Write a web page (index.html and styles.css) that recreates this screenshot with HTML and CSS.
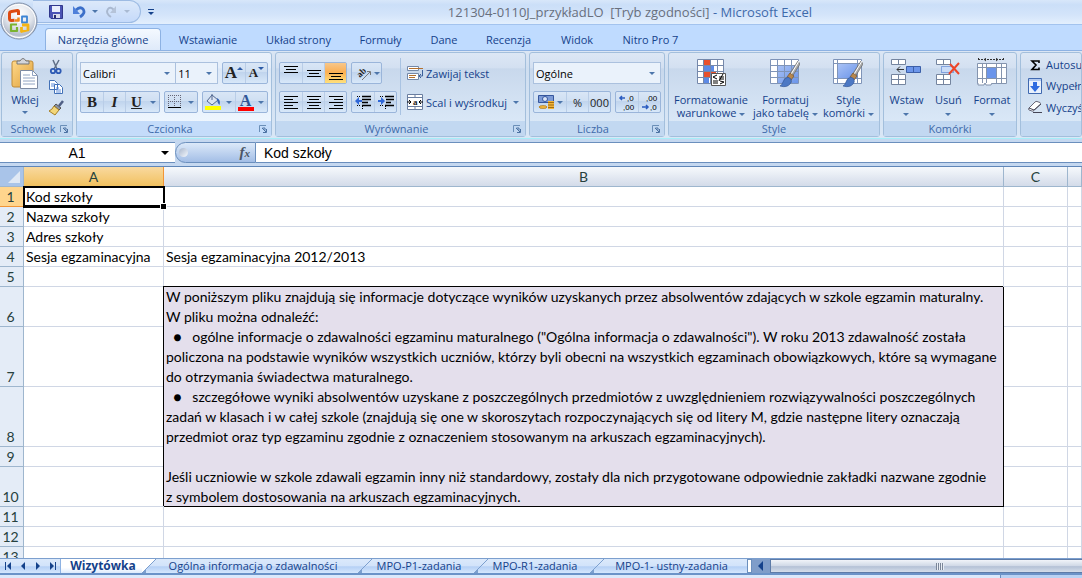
FILE: index.html
```html
<!DOCTYPE html>
<html lang="pl">
<head>
<meta charset="utf-8">
<title>121304-0110J_przykładLO [Tryb zgodności] - Microsoft Excel</title>
<link rel="stylesheet" href="styles.css">
</head>
<body>
<svg class="defs" aria-hidden="true">
  <defs>
    <linearGradient id="gBlue" x1="0" y1="0" x2="1" y2="1"><stop offset="0" stop-color="#a9c2f5"/><stop offset="1" stop-color="#6b95ea"/></linearGradient>
    <linearGradient id="gGold" x1="0" y1="0" x2="1" y2="1"><stop offset="0" stop-color="#ffd98a"/><stop offset="1" stop-color="#dfa03c"/></linearGradient>
    <radialGradient id="gOrb" cx=".5" cy=".3" r=".7"><stop offset="0" stop-color="#fff"/><stop offset=".55" stop-color="#dfe3ea"/><stop offset=".85" stop-color="#b4bccb"/><stop offset="1" stop-color="#eef2f8"/></radialGradient>
  </defs>
  <symbol id="brush" viewBox="0 0 20 28"><path d="M18 1 9 15l3 2L20 4z" fill="#a9a9a9" stroke="#666" stroke-width=".7"/><path d="m19 1-9 15" stroke="#fff"/><path d="m10 13 4 3-3 4-4-3z" fill="#b8874c" stroke="#79552c" stroke-width=".7"/><path d="M8 17q-4 1-5 5-1 3-3 4 7 2 10-2 2-2 1-5z" fill="#4c78c4" stroke="#2c4f91" stroke-width=".6"/></symbol>
  <symbol id="al" viewBox="0 0 16 16"><path d="M1 2.500h14M1 5.500h9M1 8.500h14M1 11.500h9M1 14.500h14" stroke="#000"/></symbol>
  <symbol id="launch" viewBox="0 0 8 8"><path d="M.5 7V.5H7" fill="none" stroke="#6b8fb8"/><path d="M3.500 3h2.500v2.500M3 3l4 4M4 7.500h3.500V4" fill="none" stroke="#4c72a3"/></symbol>
</svg>

<header class="titlebar">
  <button class="orb" aria-label="Przycisk Office">
    <svg viewBox="0 0 38 38"><circle cx="19" cy="19" r="18" fill="url(#gOrb)" stroke="#7f8fa8"/><circle cx="19" cy="19" r="16.500" fill="none" stroke="#fff"/>
      <g fill="none" stroke-linejoin="round"><path d="M18.500 13V9.500q0-1-1-1l-6 1q-2 .3-2 2v5q0 2 2 2l3-.3" stroke="#dd4b12" stroke-width="3"/><path d="M15 18.500h3.500v-3" stroke="#ef8a1c" stroke-width="2.500"/><path d="M22 14.500h5v6h-5z" stroke="#3c84d4" stroke-width="1.800"/><path d="M17 22.500h-6v6.500h6v-4" stroke="#7ab330" stroke-width="2.200"/><path d="M22 23h6v5l-6.500 1.500V25" stroke="#f4b414" stroke-width="2.800"/></g>
      <path d="M18 20.500h3" stroke="#fff"/></svg>
  </button>
  <div class="qat">
    <div class="pill">
      <button aria-label="Zapisz"><svg width="14" height="14" viewBox="0 0 14 14"><path d="M.5.5h13v13H2l-1.500-1.500z" fill="#4a53b5" stroke="#31388c"/><path d="M3 1h8v6H3z" fill="#e9eefc"/><path d="M4 9h7v4H4z" fill="#d9dceb"/><path d="M5 10h2v3H5z" fill="#262c6e"/></svg></button>
      <button aria-label="Cofnij"><svg width="14" height="14" viewBox="0 0 14 14"><path d="M4 5q4-4 7-1 3 4-3 8" fill="none" stroke="#3b6fc9" stroke-width="2.800"/><path d="M1 1v8h7z" fill="#4f80da"/></svg></button>
      <i class="arr"></i>
      <button aria-label="Ponów"><svg width="14" height="14" viewBox="0 0 14 14"><path d="M10 5Q6 1 4 4q-3 4 3 8" fill="none" stroke="#a9b8cf" stroke-width="2"/><path d="M12 1v7H6z" fill="#b5c3d8"/></svg></button>
      <i class="arr pale"></i>
    </div>
    <button class="more" aria-label="Dostosuj"><i></i></button>
  </div>
  <h1>121304-0110J_przykładLO&nbsp; [Tryb zgodności] <span>- Microsoft Excel</span></h1>
</header>

<nav class="tabs">
  <button class="on">Narzędzia główne</button><button>Wstawianie</button><button>Układ strony</button><button>Formuły</button><button>Dane</button><button>Recenzja</button><button>Widok</button><button>Nitro Pro 7</button>
</nav>

<section class="ribbon">
  <div class="group g-clip">
    <div class="body">
      <button class="big"><svg width="28" height="32" viewBox="0 0 28 32"><rect x="1" y="3" width="21" height="26" rx="2" fill="url(#gGold)" stroke="#bf8b38"/><path d="M6 6h12V3h-3q-3-5-6 0H6z" fill="#d4d6da" stroke="#777"/><path d="M9.500 12.500h12l5 5v13h-17z" fill="#fff" stroke="#7d8ba3"/><path d="M21.500 12.500v5h5M12 17h7M12 20h12M12 23h12M12 26h12" fill="none" stroke="#91a4c2"/></svg><span>Wklej</span><i class="arr"></i></button>
      <div class="stack">
        <button aria-label="Wytnij"><svg width="16" height="16" viewBox="0 0 16 16"><path d="m5 1 4 9M11 1 6 10" stroke="#5f6e86" stroke-width="1.500"/><circle cx="5" cy="12" r="2.200" fill="none" stroke="#2d5ab4" stroke-width="1.800"/><circle cx="10.500" cy="12" r="2.200" fill="none" stroke="#2d5ab4" stroke-width="1.800"/></svg></button>
        <button aria-label="Kopiuj"><svg width="16" height="16" viewBox="0 0 16 16"><path d="M1.500 1.500h5l3 3v6h-8zM6.500 5.500h5l3 3v6h-8z" fill="#fff" stroke="#4271b7"/><path d="M3 5h4M3 7h3M8 9h3M8 11h5M8 13h5" stroke="#5e8edb"/></svg></button>
        <button aria-label="Malarz formatów"><svg width="16" height="16" viewBox="0 0 16 16"><path d="m15 1-4 5" stroke="#4f5f85" stroke-width="2.500"/><path d="m8 4 5 4-2 2-5-4z" fill="#8893a8" stroke="#555"/><path d="m6 6 5 4-4 5-6-4q3-1 5-5z" fill="#f3d77a" stroke="#a57f26"/></svg></button>
      </div>
    </div>
    <footer><span>Schowek</span><svg class="launch"><use href="#launch"/></svg></footer>
  </div>

  <div class="group g-font hot">
    <div class="body rows">
      <div class="row">
        <label class="combo c-font"><select aria-label="Czcionka"><option>Calibri</option></select><i class="arr"></i></label><label class="combo c-size"><select aria-label="Rozmiar czcionki"><option>11</option></select><i class="arr"></i></label>
        <div class="set push"><button class="serif grow" aria-label="Zwiększ rozmiar">A<i class="up"></i></button><button class="serif shrink" aria-label="Zmniejsz rozmiar">A<i class="dn"></i></button></div>
      </div>
      <div class="row">
        <div class="set"><button class="serif">B</button><button class="serif it">I</button><button class="serif un">U</button><button class="thin" aria-label="Podkreślenie"><i class="arr"></i></button></div>
        <div class="set w20"><button aria-label="Obramowanie"><svg width="14" height="14" viewBox="0 0 14 14"><path d="M0 .5h13M0 6.500h13M.5 0v13M6.500 0v13M12.500 0v13" stroke="#667" stroke-dasharray="1 1"/><path d="M0 12.500h13" stroke="#000"/></svg></button><button class="thin" aria-label="Więcej obramowań"><i class="arr"></i></button></div>
        <div class="set w20 push"><button aria-label="Kolor wypełnienia"><svg width="16" height="16" viewBox="0 0 16 16"><path d="m7 1 6 5-6 5-5-4z" fill="#dbe4f3" stroke="#51678f"/><path d="M7 6V0" stroke="#51678f"/><path d="M12 4q4 2 2.500 7Q12 9 12 4z" fill="#3563b5"/><path d="M0 12h16v4H0z" fill="#ff0"/></svg></button><button class="thin" aria-label="Więcej wypełnień"><i class="arr"></i></button><button class="serif fc" aria-label="Kolor czcionki">A</button><button class="thin" aria-label="Więcej kolorów"><i class="arr"></i></button></div>
      </div>
    </div>
    <footer><span>Czcionka</span><svg class="launch"><use href="#launch"/></svg></footer>
  </div>

  <div class="group g-align">
    <div class="body">
      <div class="rows part">
        <div class="row">
          <div class="set"><button aria-label="Do góry"><svg width="16" height="16" viewBox="0 0 16 16"><path d="M1 1.500h14M3 4.500h10M1 7.500h14" stroke="#000"/></svg></button><button aria-label="Do środka"><svg width="16" height="16" viewBox="0 0 16 16"><path d="M1 5.500h14M3 8.500h10M1 11.500h14" stroke="#000"/></svg></button><button class="lit" aria-label="Do dołu"><svg width="16" height="16" viewBox="0 0 16 16"><path d="M1 8.500h14M3 11.500h10M1 14.500h14" stroke="#000"/></svg></button></div>
          <div class="set w29"><button aria-label="Orientacja"><svg width="18" height="20" viewBox="0 0 18 20"><path d="m8 17 8-8M16.500 12V8.500H13" fill="none" stroke="#777"/><text x="6" y="15" transform="rotate(-45 6 15)" class="abc">ab</text></svg><i class="arr"></i></button></div>
        </div>
        <div class="row">
          <div class="set"><button aria-label="Do lewej"><svg width="16" height="16"><use href="#al"/></svg></button><button aria-label="Wyśrodkuj"><svg width="16" height="16" viewBox="0 0 16 16"><path d="M1 2.500h14M3 5.500h10M1 8.500h14M3 11.500h10M1 14.500h14" stroke="#000"/></svg></button><button aria-label="Do prawej"><svg width="16" height="16" viewBox="0 0 16 16"><path d="M1 2.500h14M6 5.500h9M1 8.500h14M6 11.500h9M1 14.500h14" stroke="#000"/></svg></button></div>
          <div class="set"><button aria-label="Zmniejsz wcięcie"><svg width="16" height="16" viewBox="0 0 16 16"><path d="M0 7l4-4v3h3v2H4v3z" fill="#2f67d8"/><path d="M7 2.500h9M7 5.500h9M7 8.500h6M7 11.500h9" stroke="#000" stroke-width="1.500"/><path d="M2 2.500h4M2 11.500h4M7.500 12v4" stroke="#000" stroke-dasharray="1 1"/></svg></button><button aria-label="Zwiększ wcięcie"><svg width="16" height="16" viewBox="0 0 16 16"><path d="M7 7 3 3v3H0v2h3v3z" fill="#2f67d8"/><path d="M7 2.500h9M8 5.500h8M8 8.500h5M7 11.500h9" stroke="#000" stroke-width="1.500"/><path d="M2 2.500h4M2 11.500h4M7.500 12v4" stroke="#000" stroke-dasharray="1 1"/></svg></button></div>
        </div>
      </div>
      <div class="rows texts">
        <button class="line"><svg width="16" height="16" viewBox="0 0 16 16"><path d="M.5 1.500h11v4H.5zM.5 8.500h11v6H.5z" fill="#fff" stroke="#7388a8"/><path d="M2 3.500h14M2 10.500h7M2 12.500h6" stroke="#b3702e"/><path d="M15.500 5v6h-3M14 9l-2 2 2 2" fill="none" stroke="#3b5f9b"/></svg><span>Zawijaj tekst</span></button>
        <button class="line"><svg width="16" height="16" viewBox="0 0 16 16"><path d="M.5.500h15v15H.5z" fill="#fff" stroke="#6a7ea0"/><path d="M0 3.500h16M0 12.500h16M8 0v4M8 12v4" stroke="#6a7ea0"/><path d="M0 8h4M12 8h4M2 6l2 2-2 2M14 6l-2 2 2 2" fill="none" stroke="#000"/><text x="6" y="11" class="abc">a</text></svg><span>Scal i wyśrodkuj</span><i class="arr"></i></button>
      </div>
    </div>
    <footer><span>Wyrównanie</span><svg class="launch"><use href="#launch"/></svg></footer>
  </div>

  <div class="group g-num">
    <div class="body rows">
      <div class="row"><label class="combo c-num"><select aria-label="Format liczb"><option>Ogólne</option></select><i class="arr"></i></label></div>
      <div class="row">
        <div class="set"><button class="cur" aria-label="Waluta"><svg width="17" height="16" viewBox="0 0 17 16"><path d="M.5 1.500h15v7H.5z" fill="#7d9bd6" stroke="#35569d"/><circle cx="7" cy="5" r="2.500" fill="#dbe5f8" stroke="#35569d"/><path d="M10 7h6v8h-6z" fill="#f0b53a"/><path d="M10 8.500h6M10 11h6M10 13.500h6" stroke="#a36c12"/><ellipse cx="5" cy="13" rx="4" ry="1.500" fill="#f0b53a" stroke="#a36c12" stroke-width=".6"/></svg><i class="arr"></i></button><button>%</button><button>000</button></div>
        <div class="set"><button class="dec" aria-label="Zwiększ dziesiętne"><svg width="20" height="20" viewBox="0 0 20 20"><path d="M8 6H3M5 4 3 6l2 2" fill="none" stroke="#2b5cc0" stroke-width="1.500"/><text x="10" y="9">,0</text><text x="6" y="18">,00</text></svg></button><button class="dec" aria-label="Zmniejsz dziesiętne"><svg width="20" height="20" viewBox="0 0 20 20"><path d="M2 15h6M6 13l2 2-2 2" fill="none" stroke="#2b5cc0" stroke-width="1.500"/><text x="6" y="9">,00</text><text x="10" y="18">,0</text></svg></button></div>
      </div>
    </div>
    <footer><span>Liczba</span><svg class="launch"><use href="#launch"/></svg></footer>
  </div>

  <div class="group g-style">
    <div class="body bigs">
      <button class="big"><svg width="32" height="30" viewBox="0 0 32 30"><path d="M2.500 1.500h26v24h-26z" fill="#fff"/><path d="M8 1h7v7H8zM8 13h13v6H8z" fill="#e8502c"/><path d="M8 7h11v6H8zM8 19h6v6H8z" fill="#5c8ae6"/><path d="M2.500 1.500h26v24h-26zM2 7.500h27M2 13.500h27M2 19.500h27M8.500 1v25M15.500 1v25M22.500 1v25" fill="none" stroke="#7588aa"/><path d="M16.500 15.500h14v12h-14z" fill="#fff" stroke="#555"/><path d="m22 17-4 2 4 2M18 23h5M18 25h5M24 19h5M24 21h5M28 16l-4 7M25 23l4 1-4 2" fill="none" stroke="#000"/></svg><span>Formatowanie<br>warunkowe <i class="arr"></i></span></button>
      <button class="big"><svg width="32" height="30" viewBox="0 0 32 30"><path d="M1.500 1.500h28v24h-28z" fill="#fff"/><path d="M8 7h21v18H8z" fill="url(#gBlue)"/><path d="M1.500 1.500h28v24h-28zM1 7.500h28M1 13.500h28M1 19.500h28M8.500 1v25M15.500 1v25M22.500 1v25" fill="none" stroke="#7f94b8"/><use href="#brush" x="11" y="2" width="20" height="28"/></svg><span>Formatuj<br>jako tabelę <i class="arr"></i></span></button>
      <button class="big"><svg width="32" height="30" viewBox="0 0 32 30"><path d="M1.500 1.500h28v24h-28z" fill="#fff"/><path d="M6 6h19v14H6z" fill="url(#gBlue)"/><path d="M1.500 1.500h28v24h-28zM1 5.500h28M1 20.500h28M5.500 1v25M25.500 1v25" fill="none" stroke="#7f94b8"/><use href="#brush" x="11" y="2" width="20" height="28"/></svg><span>Style<br>komórki <i class="arr"></i></span></button>
    </div>
    <footer><span>Style</span></footer>
  </div>

  <div class="group g-cells">
    <div class="body bigs">
      <button class="big"><svg width="32" height="30" viewBox="0 0 32 30"><path d="M1.500 1.500h14v5h-14zM1.500 16.500h14v10h-14zM8.500 1v6M8.500 16v10M1 21.500h15" fill="#fff" stroke="#75859f"/><path d="M16.500 8.500h14v6h-14z" fill="#6b95ea" stroke="#3b5fa8"/><path d="M23.500 8v6" stroke="#3b5fa8"/><path d="M14 11.500H7M10 8.500l-3 3 3 3" fill="none" stroke="#333"/></svg><span>Wstaw</span><i class="arr"></i></button>
      <button class="big"><svg width="32" height="30" viewBox="0 0 32 30"><path d="M4.500 1.500h14v5h-14zM4.500 16.500h14v10h-14zM11.500 1v6M11.500 16v10M4 21.500h15" fill="#fff" stroke="#75859f"/><path d="M9.500 8.500h12v6h-12z" fill="#c9dbf7" stroke="#3b6bc8" stroke-dasharray="1 1"/><path d="m18 6 9 10M27 5l-10 11" stroke="#ee4427" stroke-width="2"/></svg><span>Usuń</span><i class="arr"></i></button>
      <button class="big"><svg width="32" height="30" viewBox="0 0 32 30"><path d="M2 1.500h26M2.500 0v3M27.500 0v3M10 0l-2 1.500 2 1.500M20 0l2 1.500-2 1.500" fill="none" stroke="#333" stroke-dasharray="2 1"/><path d="M1.500 5.500h29v20h-29z" fill="#fff"/><path d="M10 10h10v11H10z" fill="#6b95ea"/><path d="M1.500 5.500h29v20h-29zM1 9.500h29M1 20.500h29M6.500 5v20M10.500 5v20M20.500 5v20M25.500 5v20" fill="none" stroke="#8494ae"/><path d="M2 25v2h6l1-2 1 2h5l1-2" fill="#fff" stroke="#8494ae"/></svg><span>Format</span><i class="arr"></i></button>
    </div>
    <footer><span>Komórki</span></footer>
  </div>

  <div class="group g-edit">
    <div class="body stack">
      <button class="line"><svg width="14" height="14" viewBox="0 0 14 14"><path d="M11 5V3H4l4 4-4 4.500h7v-2" fill="none" stroke="#000" stroke-width="1.600"/></svg><span>Autosumowanie</span></button>
      <button class="line"><svg width="14" height="16" viewBox="0 0 14 16"><path d="M.5.500h13v15H.5z" fill="#e9f1fd" stroke="#4069b0"/><path d="M1 1h12v2H1z" fill="#b3caf0"/><path d="M5 4h4v4h3l-5 6-5-6h3z" fill="#2e6be0"/></svg><span>Wypełnienie</span></button>
      <button class="line"><svg width="14" height="14" viewBox="0 0 14 14"><path d="m1 8 6-6q1-1 2-.5l3 1q1 1 0 2l-6 6q-1 1-2 .5l-3-1q-1-1 0-2z" fill="#fff" stroke="#667"/><path d="m1 8 5 2 7-6M5 12.500h9" fill="none" stroke="#445"/></svg><span>Wyczyść</span></button>
    </div>
    <footer></footer>
  </div>
</section>

<div class="formula">
  <label class="name"><input value="A1" aria-label="Pole nazwy"><i class="arr"></i></label>
  <div class="fx"><b class="knob"></b><em>f<small>x</small></em></div>
  <input class="expr" value="Kod szkoły" aria-label="Pasek formuły">
</div>

<main class="sheet">
  <table>
    <colgroup><col class="k0"><col class="k1"><col class="k2"><col class="k3"><col></colgroup>
    <thead><tr><th class="corner"><i></i></th><th class="sel">A</th><th>B</th><th>C</th><th></th></tr></thead>
    <tbody>
      <tr><th class="sel">1</th><td class="active">Kod szkoły</td><td></td><td></td><td></td></tr>
      <tr><th>2</th><td>Nazwa szkoły</td><td></td><td></td><td></td></tr>
      <tr><th>3</th><td>Adres szkoły</td><td></td><td></td><td></td></tr>
      <tr><th>4</th><td>Sesja egzaminacyjna</td><td>Sesja egzaminacyjna 2012/2013</td><td></td><td></td></tr>
      <tr><th>5</th><td></td><td></td><td></td><td></td></tr>
      <tr class="h2"><th>6</th><td></td><td class="note" rowspan="5">W poniższym pliku znajdują się informacje dotyczące wyników uzyskanych przez absolwentów zdających w szkole egzamin maturalny.<br>W pliku można odnaleźć:<br>&nbsp; ●&nbsp;&nbsp; ogólne informacje o zdawalności egzaminu maturalnego ("Ogólna informacja o zdawalności"). W roku 2013 zdawalność została<br>policzona na podstawie wyników wszystkich uczniów, którzy byli obecni na wszystkich egzaminach obowiązkowych, które są wymagane<br>do otrzymania świadectwa maturalnego.<br>&nbsp; ●&nbsp;&nbsp; szczegółowe wyniki absolwentów uzyskane z poszczególnych przedmiotów z uwzględnieniem rozwiązywalności poszczególnych<br>zadań w klasach i w całej szkole (znajdują się one w skoroszytach rozpoczynających się od litery M, gdzie następne litery oznaczają<br>przedmiot oraz typ egzaminu zgodnie z oznaczeniem stosowanym na arkuszach egzaminacyjnych).<br><br>Jeśli uczniowie w szkole zdawali egzamin inny niż standardowy, zostały dla nich przygotowane odpowiednie zakładki nazwane zgodnie<br>z symbolem dostosowania na arkuszach egzaminacyjnych.</td><td></td><td></td></tr>
      <tr class="h3"><th>7</th><td></td><td></td><td></td></tr>
      <tr class="h3"><th>8</th><td></td><td></td><td></td></tr>
      <tr><th>9</th><td></td><td></td><td></td></tr>
      <tr class="h2"><th>10</th><td></td><td></td><td></td></tr>
      <tr><th>11</th><td></td><td></td><td></td><td></td></tr>
      <tr><th>12</th><td></td><td></td><td></td><td></td></tr>
      <tr><th>13</th><td></td><td></td><td></td><td></td></tr>
    </tbody>
  </table>
</main>

<div class="bottom">
  <div class="navs">
    <button aria-label="Pierwszy"><svg width="8" height="8" viewBox="0 0 8 8"><path d="M1 0h1v8H1zM7 0v8L3 4z"/></svg></button>
    <button aria-label="Poprzedni"><svg width="8" height="8" viewBox="0 0 8 8"><path d="M6 0v8L2 4z"/></svg></button>
    <button aria-label="Następny"><svg width="8" height="8" viewBox="0 0 8 8"><path d="M2 0v8l4-4z"/></svg></button>
    <button aria-label="Ostatni"><svg width="8" height="8" viewBox="0 0 8 8"><path d="M1 0v8l4-4zM6 0h1v8H6z"/></svg></button>
  </div>
  <button class="st on t1">Wizytówka</button>
  <svg class="slant" viewBox="0 0 14 14"><path d="M0 0h14L0 14z" fill="#fff"/><path d="M0 14 14 0" stroke="#7c9fce"/><path d="M0 14l4-4v4z" fill="#7c9fce"/></svg>
  <button class="st t2">Ogólna informacja o zdawalności</button>
  <svg class="slant" viewBox="0 0 14 14"><path d="M0 14 14 0" stroke="#7c9fce"/><path d="M0 14l4-4v4z" fill="#7c9fce"/></svg>
  <button class="st t3">MPO-P1-zadania</button>
  <svg class="slant" viewBox="0 0 14 14"><path d="M0 14 14 0" stroke="#7c9fce"/><path d="M0 14l4-4v4z" fill="#7c9fce"/></svg>
  <button class="st t3">MPO-R1-zadania</button>
  <svg class="slant" viewBox="0 0 14 14"><path d="M0 14 14 0" stroke="#7c9fce"/><path d="M0 14l4-4v4z" fill="#7c9fce"/></svg>
  <button class="st t4">MPO-1- ustny-zadania</button>
  <div class="split"></div>
  <button class="sleft" aria-label="Przewiń w lewo"><svg width="6" height="10" viewBox="0 0 6 10"><path d="M5 0v10L0 5z"/></svg></button>
  <div class="thumb"><i></i></div>
</div>
<div class="status"><i></i></div>
</body>
</html>
```

FILE: styles.css
```css
* { box-sizing: border-box; }
body {
  margin: 0;
  height: 100vh;
  display: flex;
  flex-direction: column;
  overflow: hidden;
  background: #bfdbff;
  color: #15428b;
  font: 11px "Open Sans", "Noto Sans", sans-serif;
}
button {
  border: 0;
  padding: 0;
  margin: 0;
  background: none;
  font: inherit;
  color: inherit;
  display: flex;
  align-items: center;
  justify-content: center;
  white-space: nowrap;
}
input, select { font: inherit; border: 0; margin: 0; padding: 0; outline: 0; min-width: 0; }
svg { display: block; flex: none; }
.defs { position: absolute; width: 0; height: 0; }
.arr {
  display: inline-block;
  flex: none;
  border: 3px solid transparent;
  border-top-color: #4d76ab;
  border-bottom: 0;
}
.arr.pale { border-top-color: #a9bad2; }

/* title bar */
.titlebar {
  position: relative;
  flex: none;
  display: flex;
  height: 24px;
  background: linear-gradient(#d8e7fa 0, #cbdff8 20%, #d3e4fa 60%, #e3effd 100%);
}
.orb { position: absolute; left: 0; top: 1px; z-index: 2; }
.orb svg { width: 38px; height: 40px; }
.qat { width: 178px; flex: none; display: flex; align-items: flex-start; padding-left: 33px; }
.pill {
  width: 108px;
  height: 23px;
  display: flex;
  align-items: center;
  gap: 6px;
  padding-left: 16px;
  border: 1px solid #9dbbe3;
  border-left: 0;
  border-radius: 0 12px 12px 0;
  background: linear-gradient(#dce9fa, #c5dafa);
}
.pill button:nth-of-type(2) { margin-left: 3px; }
.more { margin: 9px 0 0 7px; }
.more i { border-top: 1px solid #15428b; width: 6px; height: 7px; padding-top: 2px; }
.more i::after { content: ""; display: block; border: 3px solid transparent; border-top-color: #15428b; border-bottom: 0; }
h1 {
  flex: 1;
  margin: 0;
  font-size: 13px;
  font-weight: 400;
  line-height: 24px;
  text-align: center;
  color: #686f7d;
}
h1 span { color: #3e6aaa; }

/* ribbon tabs */
.tabs {
  flex: none;
  display: grid;
  grid-template-columns: 119px 88px 93px 71px 56px 73px 64px 83px;
  height: 26px;
  padding: 3px 0 0 45px;
  border-top: 1px solid #a3c3ee;
  background: #bfdbff;
}
.tabs .on {
  margin-right: 3px;
  border: 1px solid #8db2e3;
  border-bottom: 0;
  border-radius: 4px 4px 0 0;
  background: linear-gradient(#f4f9ff, #dfeafa);
}

/* ribbon */
.ribbon {
  flex: none;
  display: flex;
  gap: 3px;
  height: 89px;
  padding: 1px 0 1px 1px;
  border-top: 1px solid #8db2e3;
  border-bottom: 1px solid #a6eef8;
  background: linear-gradient(#dbe6f4, #cfdef0 20%, #d9e7f6);
  overflow: hidden;
}
.group {
  flex: none;
  display: flex;
  flex-direction: column;
  border: 1px solid #a3bfdc;
  border-radius: 3px;
  background: linear-gradient(#dce7f5 0, #d3e0f1 18%, #c8d8ec 19%, #dae8f7 84%);
}
.hot { background: linear-gradient(#e9f1fb 0, #e4eefa 18%, #dce8f7 19%, #eef6fe 84%); }
.g-clip { width: 72px; }
.g-font { width: 196px; }
.g-align { width: 251px; }
.g-num { width: 136px; }
.g-style { width: 212px; }
.g-cells { width: 134px; }
.g-edit { flex: 1; min-width: 62px; overflow: hidden; }
.body { flex: 1; display: flex; min-height: 0; }
.group footer {
  flex: none;
  display: flex;
  height: 15px;
  align-items: center;
  padding: 0 4px;
  background: #c2d8f1;
  color: #3e6aaa;
}
.hot footer { background: #c4dcfa; }
.group footer span { flex: 1; text-align: center; }
.launch { width: 8px; height: 8px; }
.big { flex-direction: column; justify-content: flex-start; line-height: 13px; padding-top: 5px; }
.g-clip .big { width: 46px; gap: 3px; }
.bigs { justify-content: center; gap: 5px; }
.bigs .big { gap: 5px; }
.big > .arr { margin-top: 2px; }
.big span .arr { vertical-align: middle; }
.g-cells .bigs { gap: 9px; }
.stack { display: flex; flex-direction: column; justify-content: space-around; }
.g-clip .stack { padding: 4px 0 3px; }
.rows { display: flex; flex-direction: column; gap: 7px; padding: 9px 3px 0; }
.row { display: flex; gap: 4px; }
.push { margin-left: auto; }
.combo {
  display: flex;
  align-items: center;
  height: 22px;
  padding: 0 5px 0 2px;
  border: 1px solid #abc1de;
  background: #eaf2fb;
  color: #000;
}
.combo select { flex: 1; width: 20px; appearance: none; background: none; color: #000; }
.c-font { width: 97px; }
.c-size { width: 43px; margin-left: -5px; }
.c-num { width: 128px; }
.set {
  display: flex;
  height: 22px;
  border: 1px solid #9ab5da;
  border-radius: 2px;
  background: linear-gradient(#d9e6f6 0, #cfdff2 45%, #c0d4ed 46%, #d8e8f9);
}
.set button { width: 22px; color: #222; gap: 2px; }
.set button + button { border-left: 1px solid #b9cde7; }
.set .thin { width: 12px; border-left: 0; }
.set.w20 button:not(.thin) { width: 20px; }
.set.w29 button { width: 29px; }
.set .cur { width: 32px; }
.set .lit { background: linear-gradient(#f7c78b, #fbaf53 45%, #ffe07a); }
.serif { font: bold 15px "Liberation Serif", serif; }
.set .it { font-style: italic; }
.set .un { text-decoration: underline; }
.set .grow { font-size: 17px; gap: 0; }
.set .shrink { font-size: 13px; gap: 0; }
.up, .dn { border: 3px solid transparent; align-self: flex-start; margin-top: 4px; }
.up { border-bottom-color: #2c5ba6; border-top: 0; }
.dn { border-top-color: #2c5ba6; border-bottom: 0; }
.set .fc {
  color: #2f5597;
  font-size: 16px;
  line-height: 13px;
  align-items: flex-start;
  padding-top: 2px;
  background: linear-gradient(#f00, #f00) 2px 15px / 16px 4px no-repeat;
}
.abc { font: bold 9px "Liberation Serif", serif; fill: #222; }
.dec text { font: 8px "Liberation Sans", sans-serif; fill: #000; }
.part { border-right: 1px solid #a9c3e2; margin: 5px 0 6px; padding: 4px 4px 0 3px; width: 125px; }
.line { justify-content: flex-start; gap: 3px; height: 22px; }
.line .arr { margin-left: 3px; }
.texts { padding-left: 6px; }
.g-edit .stack { padding: 1px 7px 3px; align-items: flex-start; justify-content: flex-start; }
.g-edit .line { gap: 4px; }

/* formula bar */
.formula {
  flex: none;
  display: flex;
  height: 27px;
  padding: 3px 0;
  background: #c5d8f0;
  font: 14px "Liberation Sans", Arial, sans-serif;
}
.formula > * { border: solid #6b8fbd; border-width: 1px 0; height: 21px; }
.name { display: flex; align-items: center; width: 175px; background: #fff; padding-right: 6px; }
.name input { flex: 1; text-align: center; padding-right: 7px; }
.name .arr { border-width: 4px; border-bottom: 0; border-top-color: #000; }
.formula .fx {
  width: 81px;
  display: flex;
  align-items: center;
  justify-content: space-between;
  padding: 0 5px 0 3px;
  border: 1px solid #6b8fbd;
  border-radius: 11px 0 0 11px;
  background: linear-gradient(#dce9f9, #a3bee6);
}
.knob { width: 9px; height: 9px; border-radius: 50%; background: linear-gradient(135deg, #a8b6cc, #f4f8fd); }
.fx em { font: italic bold 15px "Liberation Serif", serif; color: #4b5565; }
.fx small { font-size: 11px; }
.expr { flex: 1; padding-left: 8px; background: #fff; color: #000; }

/* grid */
.sheet { flex: 1; min-height: 0; overflow: hidden; background: #fff; border-top: 1px solid #5f86b8; }
table {
  table-layout: fixed;
  width: 100%;
  border-collapse: separate;
  border-spacing: 0;
  color: #000;
  font: 14px/19px Lato, "Open Sans", sans-serif;
}
.k0 { width: 24px; }
.k1 { width: 140px; }
.k2 { width: 840px; }
.k3 { width: 64px; }
td, th { height: 20px; padding: 0 0 0 2px; border: solid #d0d7e5; border-width: 0 1px 1px 0; vertical-align: bottom; white-space: nowrap; font-weight: 400; }
.h2 > * { height: 40px; }
.h3 > * { height: 60px; }
th { padding: 0 2px 0 0; text-align: center; color: #27413e; background: #e4ecf7; border-color: #9eb6ce; }
thead th { padding: 0; background: linear-gradient(#f6f9fc, #d3dbe9); }
thead .sel { background: linear-gradient(#f9d99f, #f1c15f); border-color: #f29536; }
tbody .sel { background: #ffd58d; border-color: #f29536; }
thead .corner { background: #a9c4e9; }
.corner i { display: block; width: 0; margin: 0 3px 3px auto; border: 6px solid transparent; border-right-color: #e0e9f5; border-bottom-color: #e0e9f5; }
.active { position: relative; box-shadow: inset 1px 1px #000, inset 0 -1px #000, 0 0 0 1px #000; z-index: 2; border-color: #000; }
.active::after { content: ""; position: absolute; right: -3px; bottom: -3px; width: 5px; height: 5px; background: #000; outline: 1px solid #fff; }
td.note {
  position: relative;
  z-index: 1;
  height: auto;
  border: 0;
  line-height: 20px;
  vertical-align: top;
  background: #e4dfec;
  box-shadow: -1px -1px #000, inset -1px -1px #000;
}

/* sheet tabs and scroll bar */
.bottom {
  flex: none;
  display: flex;
  height: 17px;
  border-top: 1px solid #7c9fce;
  border-bottom: 2px solid #6b93c8;
  background: linear-gradient(#dbe9fb 0, #d2e3fa 50%, #b5d0f5 55%, #d5e7fd);
}
.navs { width: 61px; display: flex; justify-content: space-around; border-right: 1px solid #8db2e3; flex: none; }
.navs svg, .sleft svg { fill: #15428b; }
.st { flex: none; line-height: 14px; padding-right: 8px; }
.st.on { padding: 0 0 0 3px; background: linear-gradient(#fff 60%, #dceafc); font-weight: 700; font-size: 12px; }
.t1 { width: 81px; }
.t2 { width: 202px; }
.t3 { width: 102px; }
.t4 { width: 143px; }
.slant { width: 14px; height: 14px; }
.split { width: 5px; border: 1px solid #6b8fbd; background: #fff; flex: none; }
.sleft { width: 18px; background: #7f9dc9; flex: none; }
.thumb {
  flex: 1;
  display: flex;
  align-items: center;
  justify-content: center;
  border: 1px solid #5d7ba8;
  border-right: 0;
  background: linear-gradient(#f1f4f9, #cfd8e6 50%, #b4c1d6 55%, #d5deea);
}
.thumb i { width: 8px; height: 7px; margin-left: 26px; background: repeating-linear-gradient(90deg, #7a8698 0 1px, #e8edf5 1px 2px); }
.status { flex: none; height: 3px; background: #dbe9fb; display: flex; justify-content: flex-end; }
.status i { width: 82px; border-left: 1px solid #6b8fbd; background: #b9d2f4; }
```
